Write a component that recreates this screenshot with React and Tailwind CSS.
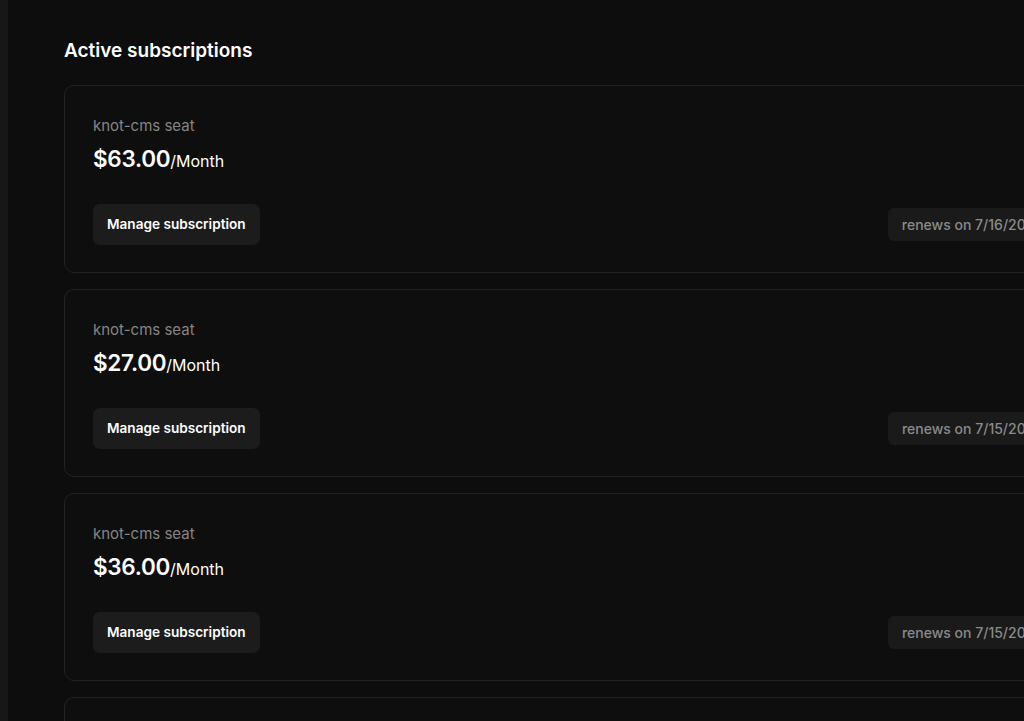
import React from "react";

const subs = [
  { price: "$63.00", date: "7/16/2025" },
  { price: "$27.00", date: "7/15/2025" },
  { price: "$36.00", date: "7/15/2025" },
  { price: "$45.00", date: "7/15/2025" },
];

function Card({ price, date }) {
  return (
    <div className="w-[1022px] shrink-0 rounded-[10px] border border-[#232323] bg-[#0e0e0e] px-[28px] pt-[30px] pb-[27px]">
      <div className="text-[15px] leading-[20px] text-[#858585]">knot-cms seat</div>
      <div className="mt-[7px] flex items-baseline text-white">
        <span className="text-[22.5px] leading-[32px] font-semibold tracking-[-0.3px]">{price}</span>
        <span className="text-[16px]">/Month</span>
      </div>
      <div className="mt-[29px] flex items-center justify-between">
        <button className="h-[41px] rounded-[7px] bg-[#1c1c1c] px-[14px] text-[13.6px] font-semibold text-white">
          Manage subscription
        </button>
        <div className="flex h-[33px] items-center rounded-[6px] bg-[#1a1a1a] px-[14px] text-[14px] font-medium text-[#8a8a8a]">
          renews on {date}
        </div>
      </div>
    </div>
  );
}

export default function App() {
  return (
    <div
      className="flex h-[721px] w-[1024px] overflow-hidden bg-[#0d0d0d]"
      style={{ fontFamily: "Inter, 'Noto Sans', sans-serif" }}
    >
      <div className="w-[8px] shrink-0 bg-[#171717]" />
      <div className="flex flex-col pl-[56px] pt-[39px]">
        <h1 className="text-[19px] leading-[24px] font-semibold text-white">Active subscriptions</h1>
        <div className="mt-[22px] flex flex-col gap-[16px]">
          {subs.map((s, i) => (
            <Card key={i} {...s} />
          ))}
        </div>
      </div>
    </div>
  );
}
